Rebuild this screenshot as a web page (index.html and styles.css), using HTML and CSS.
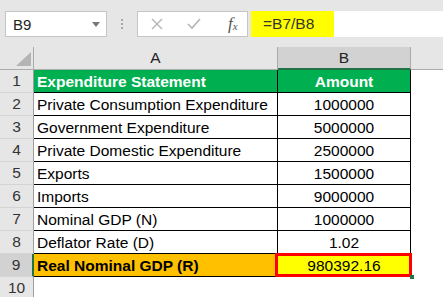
FILE: index.html
```html
<!DOCTYPE html>
<html lang="en">
<head>
<meta charset="UTF-8">
<title>GDP Deflator</title>
<link rel="stylesheet" href="styles.css">
</head>
<body>

<div class="toolbar">
  <div class="namebox">
    <span>B9</span>
    <svg class="caret" width="8" height="5" viewBox="0 0 8 5"><polygon points="0,0 8,0 4,5" fill="#777"/></svg>
  </div>
  <div class="grip"><i></i><i></i><i></i></div>
  <div class="fxbox">
    <svg class="ico" width="12" height="12" viewBox="0 0 12 12"><path d="M1 1 L11 11 M11 1 L1 11" stroke="#b4b4b4" stroke-width="1.4" fill="none"/></svg>
    <svg class="ico" width="14" height="12" viewBox="0 0 14 12"><path d="M1 6 L5 10 L13 1" stroke="#b4b4b4" stroke-width="1.6" fill="none"/></svg>
    <span class="fx">f<sub>x</sub></span>
  </div>
  <div class="formula"><span class="hl">=B7/B8</span></div>
</div>

<div class="sheet">
  <div class="corner"><svg width="34" height="22" viewBox="0 0 34 22"><polygon points="31,5 31,19 16,19" fill="#b4b4b4"/></svg></div>
  <div class="colhead">A</div>
  <div class="colhead sel">B</div>
  <div class="colhead rest"></div>

  <div class="rowhead">1</div>
  <div class="cell head">Expenditure Statement</div>
  <div class="cell head num">Amount</div>
  <div class="blank"></div>

  <div class="rowhead">2</div>
  <div class="cell">Private Consumption Expenditure</div>
  <div class="cell num">1000000</div>
  <div class="blank"></div>

  <div class="rowhead">3</div>
  <div class="cell">Government Expenditure</div>
  <div class="cell num">5000000</div>
  <div class="blank"></div>

  <div class="rowhead">4</div>
  <div class="cell">Private Domestic Expenditure</div>
  <div class="cell num">2500000</div>
  <div class="blank"></div>

  <div class="rowhead">5</div>
  <div class="cell">Exports</div>
  <div class="cell num">1500000</div>
  <div class="blank"></div>

  <div class="rowhead">6</div>
  <div class="cell">Imports</div>
  <div class="cell num">9000000</div>
  <div class="blank"></div>

  <div class="rowhead">7</div>
  <div class="cell">Nominal GDP (N)</div>
  <div class="cell num">1000000</div>
  <div class="blank"></div>

  <div class="rowhead">8</div>
  <div class="cell">Deflator Rate (D)</div>
  <div class="cell num">1.02</div>
  <div class="blank"></div>

  <div class="rowhead sel">9</div>
  <div class="cell result">Real Nominal GDP (R)</div>
  <div class="cell num active">980392.16</div>
  <div class="blank"></div>

  <div class="rowhead">10</div>
  <div class="empty"></div>
  <div class="empty"></div>
  <div class="blank"></div>
</div>

</body>
</html>
```

FILE: styles.css
```css
body {
  margin: 0;
  font-family: "Liberation Sans", Arial, sans-serif;
  font-size: 15.5px;
  color: #000;
  background-color: #fff;
}
.toolbar {
  height: 47px;
  box-sizing: border-box;
  padding-top: 11px;
  background-color: #e6e6e6;
  display: flex;
  align-items: flex-start;
}
.namebox {
  width: 102px;
  height: 26px;
  margin-left: 5px;
  box-sizing: border-box;
  border: 1px solid #c6c6c6;
  background-color: #fff;
  display: flex;
  align-items: center;
  justify-content: space-between;
  padding: 0 6px 0 7px;
  font-size: 15px;
  color: #222;
}
.caret {
  margin-top: 1px;
}
.grip {
  width: 30px;
  height: 26px;
  display: flex;
  flex-direction: column;
  align-items: center;
  justify-content: center;
  gap: 2px;
}
.grip i {
  display: block;
  width: 2px;
  height: 2px;
  background-color: #a8a8a8;
}
.fxbox {
  width: 111px;
  height: 26px;
  box-sizing: border-box;
  border: 1px solid #c6c6c6;
  background-color: #fff;
  display: flex;
  align-items: center;
  padding-left: 13px;
  gap: 24px;
}
.fx {
  font-family: "Liberation Serif", serif;
  font-style: italic;
  font-size: 17px;
  color: #555;
  margin-left: 3px;
}
.fx sub {
  font-size: 11px;
  vertical-align: -1px;
}
.formula {
  flex: 1;
  height: 26px;
  margin-left: 3px;
  box-sizing: border-box;
  background-color: #fff;
  display: flex;
}
.hl {
  width: 83px;
  background-color: #ffff00;
  padding-left: 12px;
  box-sizing: border-box;
  line-height: 26px;
  color: #333;
}
.sheet {
  display: grid;
  grid-template-columns: 34px 244px 133px 1fr;
  grid-auto-rows: 23px;
}
.corner {
  background-color: #e6e6e6;
  border-right: 1px solid #ababab;
  border-bottom: 1px solid #ababab;
  box-sizing: border-box;
}
.corner svg {
  display: block;
}
.colhead {
  background-color: #e6e6e6;
  border-right: 1px solid #ababab;
  border-bottom: 1px solid #ababab;
  box-sizing: border-box;
  text-align: center;
  line-height: 22px;
  font-size: 15.5px;
  color: #222;
}
.colhead.sel {
  background-color: #d2d2d2;
  border-bottom: 2px solid #217346;
}
.colhead.rest {
  border-right: none;
}
.rowhead {
  background-color: #e6e6e6;
  border-right: 1px solid #9e9e9e;
  border-bottom: 1px solid #d4d4d4;
  box-sizing: border-box;
  text-align: center;
  line-height: 22px;
  color: #333;
}
.rowhead.sel {
  background-color: #d2d2d2;
  border-right: 2px solid #217346;
}
.cell {
  border-right: 1px solid #000;
  border-bottom: 1px solid #000;
  box-sizing: border-box;
  display: flex;
  align-items: flex-end;
  padding-left: 3px;
  line-height: 20px;
  white-space: nowrap;
  overflow: hidden;
}
.cell.num {
  justify-content: center;
  padding-left: 0;
}
.cell.head {
  background-color: #00b050;
  color: #fff;
  font-weight: bold;
}
.cell.result {
  background-color: #ffc000;
  font-weight: bold;
}
.cell.active {
  background-color: #ffff00;
  position: relative;
  overflow: visible;
}
.cell.active::after {
  content: "";
  position: absolute;
  left: -3px;
  top: -1px;
  right: -2px;
  bottom: -1px;
  border: 3px solid #ff0000;
}
.cell.active::before {
  content: "";
  position: absolute;
  right: -4px;
  bottom: -3px;
  width: 4px;
  height: 4px;
  background-color: #217346;
  z-index: 1;
}
.blank, .empty {
  background-color: #fff;
}
```
